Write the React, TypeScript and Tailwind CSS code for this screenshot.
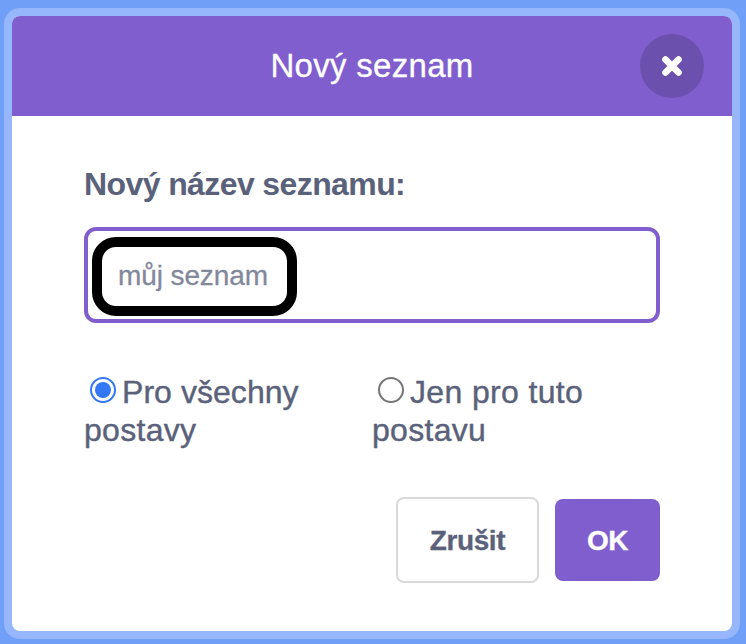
import { useState } from "react";

const scopes = [
  { id: "all", lines: ["Pro všechny", "postavy"], spacing: "tracking-[0.05px]" },
  { id: "one", lines: ["Jen pro tuto", "postavu"], spacing: "tracking-[0.35px]" },
];

function Radio({ checked }: { checked: boolean }) {
  return (
    <span
      className={`ml-1.5 mt-1 flex size-[26px] shrink-0 items-center justify-center rounded-full border-2 ${
        checked ? "border-[#3478f6]" : "border-[#767676]"
      }`}
    >
      {checked && <span className="size-4 rounded-full bg-[#3478f6]" />}
    </span>
  );
}

export default function App() {
  const [scope, setScope] = useState("all");

  return (
    <div className="h-[644px] w-[746px] overflow-hidden bg-[#709ff8] pl-1 pt-2 font-['Liberation_Sans',Arial,sans-serif] text-[#5a617a]">
      <div className="h-[631px] w-[736px] rounded-2xl bg-[#96b7fc] p-2">
        <div className="h-full overflow-hidden rounded-lg bg-white">
          <header className="grid h-[100px] grid-cols-[1fr_auto_1fr] items-center bg-[#805ecd] px-7 text-white">
            <h1 className="col-start-2 text-[33px] leading-[38px] tracking-[0.3px] [-webkit-text-stroke:0.3px_currentColor]">
              Nový seznam
            </h1>
            <button
              aria-label="Zavřít"
              className="flex size-16 items-center justify-center justify-self-end rounded-full bg-[#6c50ad]"
            >
              <svg width="20" height="20" viewBox="0 0 20 20" fill="none">
                <path d="M3.5 3.5 16.5 16.5M16.5 3.5 3.5 16.5" stroke="white" strokeWidth="6.7" strokeLinecap="round" />
              </svg>
            </button>
          </header>

          <div className="px-[72px] pt-[49px]">
            <div className="text-[32px] font-bold leading-[38px] tracking-[-0.6px]">Nový název seznamu:</div>

            <div className="mt-6 h-24 rounded-xl border-4 border-[#805ecd] pl-1 pt-1.5">
              <div className="flex h-[79px] w-[205px] items-center rounded-[24px] border-[10px] border-black pb-0.5 pl-4 text-[28px] leading-8 text-[#83889b]">
                <span className="whitespace-nowrap tracking-[-0.1px] [-webkit-text-stroke:0.3px_currentColor]">můj seznam</span>
              </div>
            </div>

            <div className="mt-[50px] grid grid-cols-2 text-[32px] leading-[38px] [-webkit-text-stroke:0.4px_currentColor]">
              {scopes.map((item) => (
                <button key={item.id} className={`text-left ${item.spacing}`} onClick={() => setScope(item.id)}>
                  <span className="flex gap-1.5">
                    <Radio checked={scope === item.id} />
                    <span className="whitespace-nowrap">{item.lines[0]}</span>
                  </span>
                  <span className="block tracking-[0.3px]">{item.lines[1]}</span>
                </button>
              ))}
            </div>

            <div className="mt-12 flex items-center justify-end gap-4 text-[28px] font-bold leading-8">
              <button className="h-[86px] w-[143px] rounded-lg border-2 border-[#d9d9d9] pt-0.5 tracking-[-0.4px] [-webkit-text-stroke:0.3px_currentColor]">
                Zrušit
              </button>
              <button className="h-[82px] w-[105px] rounded-lg bg-[#805ecd] pt-0.5 tracking-[-0.4px] text-white [-webkit-text-stroke:0.3px_currentColor]">
                OK
              </button>
            </div>
          </div>
        </div>
      </div>
    </div>
  );
}
